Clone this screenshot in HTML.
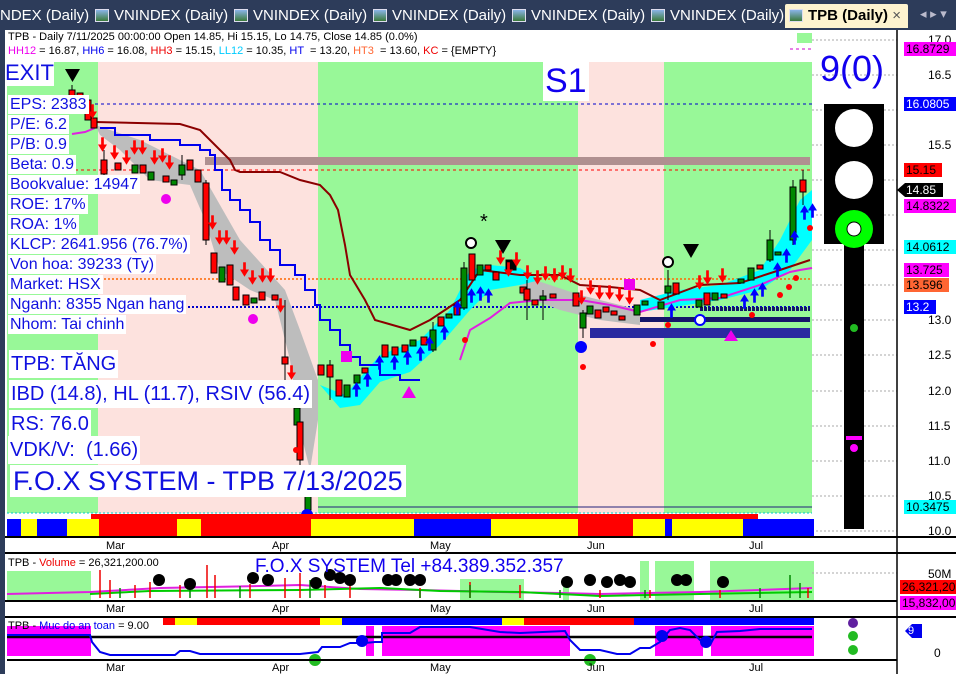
<!DOCTYPE html>
<html><head><meta charset="utf-8"><style>
*{margin:0;padding:0;box-sizing:border-box}
body{width:956px;height:674px;overflow:hidden;background:#fff;font-family:"Liberation Sans",sans-serif;position:relative}
.a{position:absolute}
.tab{position:absolute;top:5px;height:22px;color:#fff;font-size:15px;line-height:22px;white-space:nowrap}
.ic{display:inline-block;width:14px;height:13px;background:linear-gradient(#8ab4e8,#3a7a3a);border:1px solid #dde;vertical-align:-2px;margin-right:5px}
.lb{position:absolute;background:#fff;color:#1010e0;font-size:16px;line-height:19px;padding:0 2px}
.rl{position:absolute;left:904px;font-size:12px;line-height:14px;height:14px;padding:0 2px;color:#000}
.ax{position:absolute;left:928px;font-size:12px;color:#000}
.mo{position:absolute;font-size:11px;color:#000}
</style></head><body>
<div class="a" style="left:0;top:0;width:956px;height:30px;background:#2d3c5a"></div>
<div class="tab" style="left:0">NDEX (Daily)</div>
<div class="tab" style="left:95px"><span class="ic"></span>VNINDEX (Daily)</div>
<div class="tab" style="left:234px"><span class="ic"></span>VNINDEX (Daily)</div>
<div class="tab" style="left:373px"><span class="ic"></span>VNINDEX (Daily)</div>
<div class="tab" style="left:512px"><span class="ic"></span>VNINDEX (Daily)</div>
<div class="tab" style="left:651px"><span class="ic"></span>VNINDEX (Daily)</div>
<div class="a" style="left:785px;top:4px;width:123px;height:24px;background:#fdf3cf;border-radius:2px 2px 0 0;font-size:15px;font-weight:bold;line-height:24px;padding-left:4px;color:#000"><span class="ic"></span>TPB (Daily) <span style="font-weight:normal;color:#555">×</span></div>
<div class="a" style="left:920px;top:6px;color:#bbc;font-size:13px">◂ ▸ ▾</div>
<div class="a" style="left:0;top:30px;width:5px;height:644px;background:#2d3c5a"></div>

<svg class="a" style="left:5px;top:30px" width="951" height="644" viewBox="5 30 951 644">
<defs>
<symbol id="dn" viewBox="0 0 10 16"><rect x="3.5" y="0" width="3" height="9" fill="#f00"/><polygon points="0,8 10,8 5,16" fill="#f00"/></symbol>
<symbol id="up" viewBox="0 0 10 16"><rect x="3.5" y="7" width="3" height="9" fill="#00f"/><polygon points="0,8 10,8 5,0" fill="#00f"/></symbol>
</defs>
<rect x="7" y="32" width="91" height="481" fill="#98f898"/>
<rect x="98" y="32" width="220" height="481" fill="#fde2de"/>
<rect x="318" y="32" width="260" height="481" fill="#98f898"/>
<rect x="578" y="32" width="86" height="481" fill="#fde2de"/>
<rect x="664" y="32" width="148" height="481" fill="#98f898"/>
<rect x="7" y="30" width="805" height="32" fill="#fff"/>
<rect x="797" y="33" width="15" height="10" fill="#98f898"/>
<rect x="812" y="30" width="85" height="510" fill="#fff"/>
<g stroke="#aaa" stroke-dasharray="2,2">
<line x1="812" y1="40" x2="897" y2="40"/><line x1="812" y1="75" x2="897" y2="75"/><line x1="812" y1="110" x2="897" y2="110"/><line x1="812" y1="145" x2="897" y2="145"/><line x1="812" y1="180" x2="897" y2="180"/><line x1="812" y1="215" x2="897" y2="215"/><line x1="812" y1="250" x2="897" y2="250"/><line x1="812" y1="285" x2="897" y2="285"/><line x1="812" y1="320" x2="897" y2="320"/><line x1="812" y1="355" x2="897" y2="355"/><line x1="812" y1="391" x2="897" y2="391"/><line x1="812" y1="426" x2="897" y2="426"/><line x1="812" y1="461" x2="897" y2="461"/><line x1="812" y1="496" x2="897" y2="496"/><line x1="812" y1="531" x2="897" y2="531"/>
</g>
<line x1="95" y1="104" x2="812" y2="104" stroke="#00c" stroke-dasharray="3,3"/>
<line x1="790" y1="49" x2="812" y2="49" stroke="#c0c" stroke-dasharray="3,3"/>
<rect x="205" y="157" width="605" height="8" fill="#b09090"/>
<line x1="75" y1="170" x2="812" y2="170" stroke="#f00" stroke-dasharray="3,3"/>
<line x1="100" y1="279" x2="812" y2="279" stroke="#f60" stroke-width="1.5" stroke-dasharray="2,2"/>
<line x1="180" y1="307" x2="812" y2="307" stroke="#00c" stroke-width="2" stroke-dasharray="2,2"/>
<line x1="700" y1="309" x2="810" y2="309" stroke="#14146a" stroke-width="4" stroke-dasharray="3,1"/>
<rect x="640" y="317" width="170" height="5" fill="#14146a"/>
<rect x="590" y="328" width="220" height="10" fill="#2a2aa0"/>
<line x1="7" y1="513" x2="812" y2="513" stroke="#0cc" stroke-dasharray="2,2"/>
<line x1="318" y1="507" x2="812" y2="507" stroke="#22227a"/>
<polygon points="95,125 140,140 200,170 240,240 285,290 300,330 318,380 318,420 310,470 300,430 290,360 275,300 250,290 220,270 205,220 190,185 150,180 120,150 100,135" fill="#bdbdbd"/>
<polygon points="520,275 580,295 640,310 640,325 600,320 560,310 520,295" fill="#bdbdbd"/>
<polygon points="320,385 345,395 380,355 420,340 450,310 470,270 490,265 520,268 540,280 520,285 490,290 470,310 440,345 410,372 380,382 360,405 340,408" fill="#0ff"/>
<polygon points="640,300 680,290 720,285 760,270 780,240 800,200 812,190 812,240 790,270 760,290 720,300 680,306 640,312" fill="#0ff"/>
<polyline points="460,360 470,330 490,318 510,303 540,300 580,300 610,305 640,312 680,300 720,298 760,285 790,272 800,270 812,268" fill="none" stroke="#e020e0" stroke-width="2"/>
<polyline points="72,134 85,132 95,128" fill="none" stroke="#e020e0" stroke-width="2"/>
<polyline points="100,128 115,128 115,135 150,135 150,140 180,140 180,145 200,145 200,150 210,150 210,155 215,155 215,170 222,170 222,190 230,190 230,200 240,200 240,210 250,210 250,222 260,222 260,240 270,240 270,250 280,250 280,265 295,265 295,275 305,275 305,290 315,290 315,305 320,305 320,320 330,320 330,330 340,330 340,345 350,345 350,357 360,357 360,365 380,365 380,375 400,375 400,380 420,380" fill="none" stroke="#0000ee" stroke-width="2"/>
<polyline points="95,122 180,124 200,130 220,150 230,160 235,170 240,172 280,172 300,180 320,185 330,195 338,210 345,245 350,275 365,300 375,320 410,330 430,320 460,300 480,270 520,275 560,275 580,285 610,287 640,290 660,300 700,285 740,283 780,270 810,260" fill="none" stroke="#8b0000" stroke-width="2"/>
<g stroke="#000" stroke-width="1">
<line x1="72" y1="85" x2="72" y2="108"/><rect x="69" y="90" width="6" height="12" fill="#f00"/>
<rect x="77" y="93" width="6" height="12" fill="#f00"/>
<rect x="85" y="100" width="6" height="20" fill="#f00"/>
<rect x="91" y="118" width="6" height="10" fill="#f00"/>
<line x1="104" y1="150" x2="104" y2="180"/><rect x="101" y="160" width="6" height="14" fill="#f00"/>
<rect x="115" y="163" width="6" height="7" fill="#f00"/>
<rect x="132" y="165" width="6" height="8" fill="#080"/>
<rect x="140" y="165" width="6" height="8" fill="#f00"/>
<rect x="148" y="172" width="6" height="8" fill="#080"/>
<rect x="163" y="176" width="6" height="6" fill="#f00"/>
<rect x="171" y="180" width="6" height="5" fill="#080"/>
<line x1="182" y1="155" x2="182" y2="180"/><rect x="179" y="165" width="6" height="10" fill="#080"/>
<rect x="187" y="160" width="6" height="10" fill="#f00"/>
<rect x="195" y="170" width="6" height="12" fill="#f00"/>
<line x1="206" y1="180" x2="206" y2="245"/><rect x="203" y="183" width="6" height="57" fill="#f00"/>
<rect x="211" y="253" width="6" height="20" fill="#f00"/>
<rect x="219" y="267" width="6" height="15" fill="#080"/>
<rect x="227" y="265" width="6" height="20" fill="#f00"/>
<rect x="233" y="287" width="6" height="13" fill="#f00"/>
<rect x="243" y="295" width="6" height="10" fill="#f00"/>
<rect x="251" y="298" width="6" height="5" fill="#080"/>
<rect x="259" y="292" width="6" height="8" fill="#f00"/>
<rect x="272" y="295" width="6" height="5" fill="#f00"/>
<line x1="285" y1="300" x2="285" y2="400"/><rect x="282" y="357" width="6" height="7" fill="#f00"/>
<rect x="294" y="408" width="6" height="17" fill="#080"/>
<line x1="300" y1="420" x2="300" y2="465"/><rect x="297" y="422" width="6" height="38" fill="#f00"/>
<rect x="305" y="495" width="6" height="15" fill="#080"/>
<rect x="318" y="365" width="6" height="10" fill="#f00"/>
<line x1="330" y1="360" x2="330" y2="400"/><rect x="327" y="365" width="6" height="12" fill="#f00"/>
<rect x="336" y="380" width="6" height="16" fill="#f00"/>
<rect x="344" y="385" width="6" height="12" fill="#080"/>
<rect x="354" y="375" width="6" height="8" fill="#080"/>
<rect x="362" y="368" width="6" height="5" fill="#f00"/>
<rect x="382" y="345" width="6" height="12" fill="#f00"/>
<rect x="392" y="347" width="6" height="8" fill="#f00"/>
<rect x="402" y="345" width="6" height="7" fill="#f00"/>
<rect x="410" y="340" width="6" height="6" fill="#080"/>
<rect x="421" y="337" width="6" height="8" fill="#f00"/>
<line x1="433" y1="322" x2="433" y2="352"/><rect x="430" y="330" width="6" height="20" fill="#080"/>
<rect x="438" y="317" width="6" height="9" fill="#f00"/>
<rect x="446" y="314" width="6" height="4" fill="#080"/>
<rect x="454" y="305" width="6" height="10" fill="#f00"/>
<line x1="464" y1="262" x2="464" y2="310"/><rect x="461" y="268" width="6" height="40" fill="#080"/>
<rect x="469" y="254" width="6" height="26" fill="#f00"/>
<rect x="477" y="265" width="6" height="10" fill="#080"/>
<rect x="485" y="265" width="6" height="5" fill="#f00"/>
<rect x="493" y="272" width="6" height="8" fill="#f00"/>
<rect x="506" y="260" width="10" height="10" fill="#000"/>
<rect x="520" y="287" width="6" height="6" fill="#f00"/>
<line x1="527" y1="280" x2="527" y2="320"/><rect x="524" y="289" width="6" height="11" fill="#f00"/>
<rect x="532" y="300" width="6" height="5" fill="#f00"/>
<line x1="543" y1="290" x2="543" y2="320"/><rect x="540" y="296" width="6" height="4" fill="#080"/>
<rect x="550" y="294" width="6" height="4" fill="#f00"/>
<rect x="573" y="293" width="6" height="13" fill="#f00"/>
<line x1="583" y1="310" x2="583" y2="338"/><rect x="580" y="313" width="6" height="15" fill="#080"/>
<rect x="587" y="306" width="6" height="8" fill="#080"/>
<rect x="595" y="310" width="6" height="8" fill="#f00"/>
<rect x="603" y="307" width="6" height="5" fill="#f00"/>
<rect x="611" y="311" width="6" height="4" fill="#f00"/>
<rect x="619" y="316" width="6" height="4" fill="#f00"/>
<rect x="634" y="305" width="6" height="10" fill="#080"/>
<rect x="642" y="301" width="6" height="4" fill="#080"/>
<rect x="658" y="302" width="6" height="7" fill="#080"/>
<line x1="668" y1="270" x2="668" y2="300"/><rect x="665" y="286" width="6" height="7" fill="#080"/>
<rect x="673" y="283" width="6" height="11" fill="#f00"/>
<rect x="696" y="300" width="6" height="7" fill="#080"/>
<rect x="704" y="293" width="6" height="12" fill="#f00"/>
<rect x="712" y="293" width="6" height="7" fill="#080"/>
<rect x="721" y="294" width="6" height="4" fill="#f00"/>
<rect x="738" y="279" width="6" height="4" fill="#080"/>
<rect x="748" y="268" width="6" height="12" fill="#080"/>
<rect x="757" y="265" width="6" height="4" fill="#f00"/>
<line x1="770" y1="230" x2="770" y2="262"/><rect x="767" y="240" width="6" height="20" fill="#080"/>
<rect x="775" y="252" width="6" height="3" fill="#080"/>
<line x1="793" y1="180" x2="793" y2="245"/><rect x="790" y="187" width="6" height="53" fill="#080"/>
<line x1="803" y1="170" x2="803" y2="205"/><rect x="800" y="180" width="6" height="12" fill="#f00"/>
</g>
<use href="#dn" x="88" y="104" width="9" height="15"/>
<use href="#dn" x="98" y="137" width="9" height="15"/>
<use href="#dn" x="110" y="145" width="9" height="15"/>
<use href="#dn" x="122" y="150" width="9" height="15"/>
<use href="#dn" x="130" y="140" width="9" height="15"/>
<use href="#dn" x="138" y="140" width="9" height="15"/>
<use href="#dn" x="150" y="150" width="9" height="15"/>
<use href="#dn" x="158" y="148" width="9" height="15"/>
<use href="#dn" x="165" y="155" width="9" height="15"/>
<use href="#dn" x="208" y="215" width="9" height="15"/>
<use href="#dn" x="215" y="230" width="9" height="15"/>
<use href="#dn" x="222" y="230" width="9" height="15"/>
<use href="#dn" x="230" y="240" width="9" height="15"/>
<use href="#dn" x="240" y="262" width="9" height="15"/>
<use href="#dn" x="248" y="270" width="9" height="15"/>
<use href="#dn" x="258" y="268" width="9" height="15"/>
<use href="#dn" x="266" y="268" width="9" height="15"/>
<use href="#dn" x="276" y="298" width="9" height="15"/>
<use href="#dn" x="287" y="365" width="9" height="15"/>
<use href="#dn" x="496" y="250" width="9" height="15"/>
<use href="#dn" x="504" y="262" width="9" height="15"/>
<use href="#dn" x="512" y="252" width="9" height="15"/>
<use href="#dn" x="523" y="265" width="9" height="15"/>
<use href="#dn" x="533" y="270" width="9" height="15"/>
<use href="#dn" x="541" y="266" width="9" height="15"/>
<use href="#dn" x="550" y="268" width="9" height="15"/>
<use href="#dn" x="558" y="265" width="9" height="15"/>
<use href="#dn" x="566" y="268" width="9" height="15"/>
<use href="#dn" x="577" y="290" width="9" height="15"/>
<use href="#dn" x="586" y="280" width="9" height="15"/>
<use href="#dn" x="595" y="285" width="9" height="15"/>
<use href="#dn" x="605" y="285" width="9" height="15"/>
<use href="#dn" x="615" y="287" width="9" height="15"/>
<use href="#dn" x="625" y="290" width="9" height="15"/>
<use href="#dn" x="695" y="275" width="9" height="15"/>
<use href="#dn" x="703" y="270" width="9" height="15"/>
<use href="#dn" x="718" y="268" width="9" height="15"/>
<use href="#up" x="352" y="382" width="9" height="15"/>
<use href="#up" x="363" y="372" width="9" height="15"/>
<use href="#up" x="375" y="355" width="9" height="15"/>
<use href="#up" x="390" y="355" width="9" height="15"/>
<use href="#up" x="403" y="350" width="9" height="15"/>
<use href="#up" x="416" y="346" width="9" height="15"/>
<use href="#up" x="425" y="336" width="9" height="15"/>
<use href="#up" x="440" y="325" width="9" height="15"/>
<use href="#up" x="453" y="300" width="9" height="15"/>
<use href="#up" x="467" y="288" width="9" height="15"/>
<use href="#up" x="476" y="286" width="9" height="15"/>
<use href="#up" x="484" y="288" width="9" height="15"/>
<use href="#up" x="667" y="303" width="9" height="15"/>
<use href="#up" x="740" y="294" width="9" height="15"/>
<use href="#up" x="750" y="288" width="9" height="15"/>
<use href="#up" x="758" y="282" width="9" height="15"/>
<use href="#up" x="773" y="262" width="9" height="15"/>
<use href="#up" x="782" y="248" width="9" height="15"/>
<use href="#up" x="790" y="230" width="9" height="15"/>
<use href="#up" x="800" y="205" width="9" height="15"/>
<use href="#up" x="808" y="203" width="9" height="15"/>
<polygon points="65,69 80,69 72.5,82" fill="#000"/>
<polygon points="495,240 511,240 503,254" fill="#000"/>
<polygon points="683,244 699,244 691,258" fill="#000"/>
<circle cx="166" cy="199" r="5" fill="#e0e"/>
<circle cx="253" cy="319" r="5" fill="#e0e"/>
<rect x="341" y="351" width="11" height="11" fill="#e0e"/>
<rect x="624" y="279" width="11" height="11" fill="#e0e"/>
<polygon points="409,386 402,398 416,398" fill="#e0e"/>
<polygon points="731,330 724,341 738,341" fill="#e0e"/>
<circle cx="471" cy="243" r="5" fill="#fff" stroke="#000" stroke-width="2"/>
<circle cx="668" cy="262" r="5" fill="#fff" stroke="#000" stroke-width="2"/>
<circle cx="581" cy="347" r="6" fill="#00f"/>
<circle cx="700" cy="320" r="5" fill="#fff" stroke="#00f" stroke-width="2"/>
<circle cx="307" cy="515" r="6" fill="#00f"/>
<text x="480" y="228" font-size="20" font-family="Liberation Sans" fill="#000">*</text>
<g fill="#f00"><circle cx="583" cy="367" r="3"/><circle cx="653" cy="344" r="3"/><circle cx="668" cy="325" r="3"/><circle cx="752" cy="315" r="3"/><circle cx="780" cy="295" r="3"/><circle cx="789" cy="287" r="3"/><circle cx="796" cy="278" r="3"/><circle cx="810" cy="228" r="3"/><circle cx="296" cy="450" r="3"/><circle cx="465" cy="340" r="3"/></g>
<rect x="91" y="514" width="667" height="5" fill="#f00"/>
<rect x="7" y="519" width="14" height="17" fill="#00f"/><rect x="21" y="519" width="16" height="17" fill="#ff0"/><rect x="37" y="519" width="30" height="17" fill="#00f"/><rect x="67" y="519" width="32" height="17" fill="#ff0"/><rect x="99" y="519" width="78" height="17" fill="#f00"/><rect x="177" y="519" width="24" height="17" fill="#ff0"/><rect x="201" y="519" width="110" height="17" fill="#f00"/><rect x="311" y="519" width="103" height="17" fill="#ff0"/><rect x="414" y="519" width="77" height="17" fill="#00f"/><rect x="491" y="519" width="87" height="17" fill="#ff0"/><rect x="578" y="519" width="55" height="17" fill="#f00"/><rect x="633" y="519" width="32" height="17" fill="#ff0"/><rect x="665" y="519" width="7" height="17" fill="#00f"/><rect x="672" y="519" width="71" height="17" fill="#ff0"/><rect x="743" y="519" width="71" height="17" fill="#00f"/>
<line x1="5" y1="537" x2="956" y2="537" stroke="#000" stroke-width="2"/>
<line x1="5" y1="553" x2="956" y2="553" stroke="#000" stroke-width="2"/>
<rect x="7" y="571" width="84" height="30" fill="#98f898"/>
<rect x="460" y="579" width="64" height="22" fill="#98f898"/>
<rect x="563" y="586" width="6" height="15" fill="#98f898"/>
<rect x="640" y="561" width="9" height="40" fill="#98f898"/>
<rect x="655" y="561" width="39" height="40" fill="#98f898"/>
<rect x="710" y="561" width="104" height="40" fill="#98f898"/>
<line x1="812" y1="573" x2="897" y2="573" stroke="#aaa" stroke-dasharray="2,2"/>
<polyline points="7,594 90,592 160,588 260,586 300,585 360,589 420,590 500,592 560,593 600,594 700,592 760,590 812,588" fill="none" stroke="#e020e0" stroke-width="2"/>
<polyline points="90,594 150,591 300,590 380,588 440,591 520,592 600,596 700,594 812,592" fill="none" stroke="#00cc00" stroke-width="2"/>
<g stroke="#e00" stroke-width="1.5">
<line x1="100" y1="598" x2="100" y2="570"/><line x1="110" y1="598" x2="110" y2="580"/><line x1="135" y1="598" x2="135" y2="585"/><line x1="150" y1="598" x2="150" y2="582"/><line x1="180" y1="598" x2="180" y2="585"/><line x1="207" y1="598" x2="207" y2="565"/><line x1="215" y1="598" x2="215" y2="575"/><line x1="250" y1="598" x2="250" y2="584"/><line x1="285" y1="598" x2="285" y2="578"/><line x1="300" y1="598" x2="300" y2="573"/><line x1="325" y1="598" x2="325" y2="585"/><line x1="350" y1="598" x2="350" y2="585"/><line x1="420" y1="598" x2="420" y2="588"/><line x1="470" y1="598" x2="470" y2="582"/><line x1="520" y1="598" x2="520" y2="585"/><line x1="600" y1="598" x2="600" y2="590"/><line x1="650" y1="598" x2="650" y2="590"/><line x1="720" y1="598" x2="720" y2="590"/><line x1="808" y1="598" x2="808" y2="588"/></g>
<g stroke="#080" stroke-width="1.5"><line x1="120" y1="598" x2="120" y2="588"/><line x1="190" y1="598" x2="190" y2="584"/><line x1="240" y1="598" x2="240" y2="586"/><line x1="310" y1="598" x2="310" y2="580"/><line x1="420" y1="598" x2="420" y2="590"/><line x1="470" y1="598" x2="470" y2="585"/><line x1="560" y1="598" x2="560" y2="590"/><line x1="645" y1="598" x2="645" y2="590"/><line x1="760" y1="598" x2="760" y2="588"/><line x1="790" y1="598" x2="790" y2="575"/><line x1="800" y1="598" x2="800" y2="583"/></g>
<g fill="#000"><circle cx="159" cy="580" r="6"/><circle cx="190" cy="584" r="6"/><circle cx="253" cy="578" r="6"/><circle cx="268" cy="580" r="6"/><circle cx="316" cy="583" r="6"/><circle cx="330" cy="575" r="6"/><circle cx="340" cy="578" r="6"/><circle cx="350" cy="580" r="6"/><circle cx="388" cy="580" r="6"/><circle cx="396" cy="580" r="6"/><circle cx="410" cy="580" r="6"/><circle cx="420" cy="580" r="6"/><circle cx="567" cy="582" r="6"/><circle cx="590" cy="580" r="6"/><circle cx="607" cy="582" r="6"/><circle cx="620" cy="580" r="6"/><circle cx="630" cy="582" r="6"/><circle cx="677" cy="580" r="6"/><circle cx="686" cy="580" r="6"/><circle cx="723" cy="582" r="6"/></g>
<line x1="5" y1="601" x2="897" y2="601" stroke="#000" stroke-width="2"/>
<line x1="5" y1="617" x2="956" y2="617" stroke="#000" stroke-width="2"/>
<rect x="163" y="618" width="12" height="7" fill="#f00"/><rect x="175" y="618" width="22" height="7" fill="#ff0"/><rect x="197" y="618" width="123" height="7" fill="#f00"/><rect x="320" y="618" width="22" height="7" fill="#ff0"/><rect x="342" y="618" width="160" height="7" fill="#00f"/><rect x="502" y="618" width="22" height="7" fill="#ff0"/><rect x="524" y="618" width="110" height="7" fill="#f00"/><rect x="634" y="618" width="180" height="7" fill="#00f"/>
<rect x="7" y="626" width="84" height="30" fill="#f0f"/>
<rect x="366" y="626" width="8" height="30" fill="#f0f"/><rect x="382" y="626" width="188" height="30" fill="#f0f"/><rect x="655" y="626" width="48" height="30" fill="#f0f"/><rect x="711" y="626" width="103" height="30" fill="#f0f"/>
<line x1="7" y1="637" x2="812" y2="637" stroke="#000" stroke-width="2.5"/>
<polyline points="7,635 90,635 92,642 100,652 110,655 175,655 180,651 190,651 200,654 300,654 318,652 322,647 340,647 350,643 365,643 375,642 382,642 382,633 410,633 420,627 440,627 470,627 500,632 520,633 565,631 570,640 580,650 600,650 617,654 630,654 640,648 650,648 660,642 670,630 680,628 690,630 700,640 710,645 717,632 740,631 760,629 812,629" fill="none" stroke="#00e" stroke-width="2"/>
<g fill="#00e"><circle cx="362" cy="641" r="6"/><circle cx="662" cy="636" r="6"/><circle cx="706" cy="642" r="6"/></g>
<g fill="#2b2"><circle cx="315" cy="660" r="6"/><circle cx="590" cy="660" r="6"/><circle cx="853" cy="650" r="5"/><circle cx="853" cy="636" r="5"/></g>
<circle cx="853" cy="623" r="5" fill="#6020a0"/>
<line x1="7" y1="660" x2="897" y2="660" stroke="#000" stroke-width="2"/>
<line x1="897" y1="30" x2="897" y2="674" stroke="#000" stroke-width="1.5"/>
<rect x="824" y="104" width="60" height="140" fill="#000"/>
<rect x="844" y="244" width="20" height="285" fill="#000"/>
<circle cx="854" cy="128" r="19" fill="#fff"/>
<circle cx="854" cy="180" r="19" fill="#fff"/>
<circle cx="854" cy="229" r="19" fill="#0f0"/>
<circle cx="854" cy="229" r="7" fill="#fff" stroke="#000"/>
<circle cx="854" cy="328" r="4" fill="#2b2"/>
<rect x="846" y="436" width="16" height="4" fill="#f0f"/>
<circle cx="854" cy="448" r="4" fill="#f0f"/>
<polygon points="897,190 905,183 943,183 943,197 905,197" fill="#000"/>
<polygon points="905,631 912,624 922,624 922,638 912,638" fill="#00e"/>
</svg>

<div class="a" style="left:8px;top:31px;font-size:11px;line-height:13px;color:#000">TPB - Daily 7/11/2025 00:00:00 Open 14.85, Hi 15.15, Lo 14.75, Close 14.85 (0.0%)</div>
<div class="a" style="left:8px;top:45px;font-size:11px;line-height:13px;color:#000"><span style="color:#e0e">HH12</span> = 16.87, <span style="color:#00e">HH6</span> = 16.08, <span style="color:#e00">HH3</span> = 15.15, <span style="color:#0cf">LL12</span> = 10.35, <span style="color:#00e">HT</span> &nbsp;= 13.20, <span style="color:#f63">HT3</span> &nbsp;= 13.60, <span style="color:#e00">KC</span> = {EMPTY}</div>
<div class="lb" style="left:5px;top:60px;font-size:22px;line-height:26px;padding:0">EXIT</div>
<div class="lb" style="left:8px;top:95px">EPS: 2383</div>
<div class="lb" style="left:8px;top:115px">P/E: 6.2</div>
<div class="lb" style="left:8px;top:135px">P/B: 0.9</div>
<div class="lb" style="left:8px;top:155px">Beta: 0.9</div>
<div class="lb" style="left:8px;top:175px">Bookvalue: 14947</div>
<div class="lb" style="left:8px;top:195px">ROE: 17%</div>
<div class="lb" style="left:8px;top:215px">ROA: 1%</div>
<div class="lb" style="left:8px;top:235px">KLCP: 2641.956 (76.7%)</div>
<div class="lb" style="left:8px;top:255px">Von hoa: 39233 (Ty)</div>
<div class="lb" style="left:8px;top:275px">Market: HSX</div>
<div class="lb" style="left:8px;top:295px">Nganh: 8355 Ngan hang</div>
<div class="lb" style="left:8px;top:315px">Nhom: Tai chinh</div>
<div class="lb" style="left:9px;top:350px;font-size:20px;line-height:28px">TPB: TĂNG</div>
<div class="lb" style="left:9px;top:380px;font-size:20px;line-height:28px">IBD (14.8), HL (11.7), RSIV (56.4)</div>
<div class="lb" style="left:9px;top:410px;font-size:20px;line-height:28px">RS: 76.0</div>
<div class="lb" style="left:8px;top:436px;font-size:20px;line-height:28px">VDK/V: &nbsp;(1.66)</div>
<div class="lb" style="left:10px;top:465px;font-size:27px;line-height:32px;padding:0 3px">F.O.X SYSTEM - TPB 7/13/2025</div>
<div class="a" style="left:543px;top:62px;font-size:34px;color:#10e;background:#fff;padding:0 2px">S1</div>
<div class="a" style="left:820px;top:48px;font-size:36px;color:#10e">9(0)</div>
<div class="ax" style="top:33px">17.0</div><div class="ax" style="top:68px">16.5</div><div class="ax" style="top:138px">15.5</div><div class="ax" style="top:243px">14.0</div><div class="ax" style="top:313px">13.0</div><div class="ax" style="top:348px">12.5</div><div class="ax" style="top:384px">12.0</div><div class="ax" style="top:419px">11.5</div><div class="ax" style="top:454px">11.0</div><div class="ax" style="top:489px">10.5</div><div class="ax" style="top:524px">10.0</div>
<div class="rl" style="top:42px;background:#f0f;width:52px">16.8729</div>
<div class="rl" style="top:97px;background:#00f;color:#fff;width:52px">16.0805</div>
<div class="rl" style="top:163px;background:#f00;width:38px">15.15</div>
<div class="rl" style="top:183px;color:#fff">14.85</div>
<div class="rl" style="top:199px;background:#f0f;width:52px">14.8322</div>
<div class="rl" style="top:240px;background:#0ff;width:52px">14.0612</div>
<div class="rl" style="top:263px;background:#f0f;width:45px">13.725</div>
<div class="rl" style="top:278px;background:#f63;width:45px">13.596</div>
<div class="rl" style="top:300px;background:#00f;color:#fff;width:32px">13.2</div>
<div class="rl" style="top:500px;background:#0ff;width:52px">10.3475</div>
<div class="ax" style="left:928px;top:567px">50M</div>
<div class="rl" style="top:580px;left:900px;background:#f00;width:56px">26,321,20</div>
<div class="rl" style="top:596px;left:900px;background:#f0f;width:56px">15,832,00</div>
<div class="a" style="left:908px;top:625px;font-size:11px;color:#fff">9</div>
<div class="ax" style="left:934px;top:646px">0</div>
<div class="mo" style="left:106px;top:540px">Mar</div><div class="mo" style="left:272px;top:540px">Apr</div><div class="mo" style="left:430px;top:540px">May</div><div class="mo" style="left:587px;top:540px">Jun</div><div class="mo" style="left:749px;top:540px">Jul</div>
<div class="mo" style="left:106px;top:603px">Mar</div><div class="mo" style="left:272px;top:603px">Apr</div><div class="mo" style="left:430px;top:603px">May</div><div class="mo" style="left:587px;top:603px">Jun</div><div class="mo" style="left:749px;top:603px">Jul</div>
<div class="mo" style="left:106px;top:662px">Mar</div><div class="mo" style="left:272px;top:662px">Apr</div><div class="mo" style="left:430px;top:662px">May</div><div class="mo" style="left:587px;top:662px">Jun</div><div class="mo" style="left:749px;top:662px">Jul</div>
<div class="a" style="left:8px;top:557px;font-size:11px;color:#000">TPB - <span style="color:#e00">Volume</span> = 26,321,200.00</div>
<div class="a" style="left:255px;top:556px;font-size:19px;color:#10e">F.O.X SYSTEM Tel +84.389.352.357</div>
<div class="a" style="left:8px;top:620px;font-size:11px;color:#000">TPB - <span style="color:#00e">Muc do an toan</span> = 9.00</div>
</body></html>
